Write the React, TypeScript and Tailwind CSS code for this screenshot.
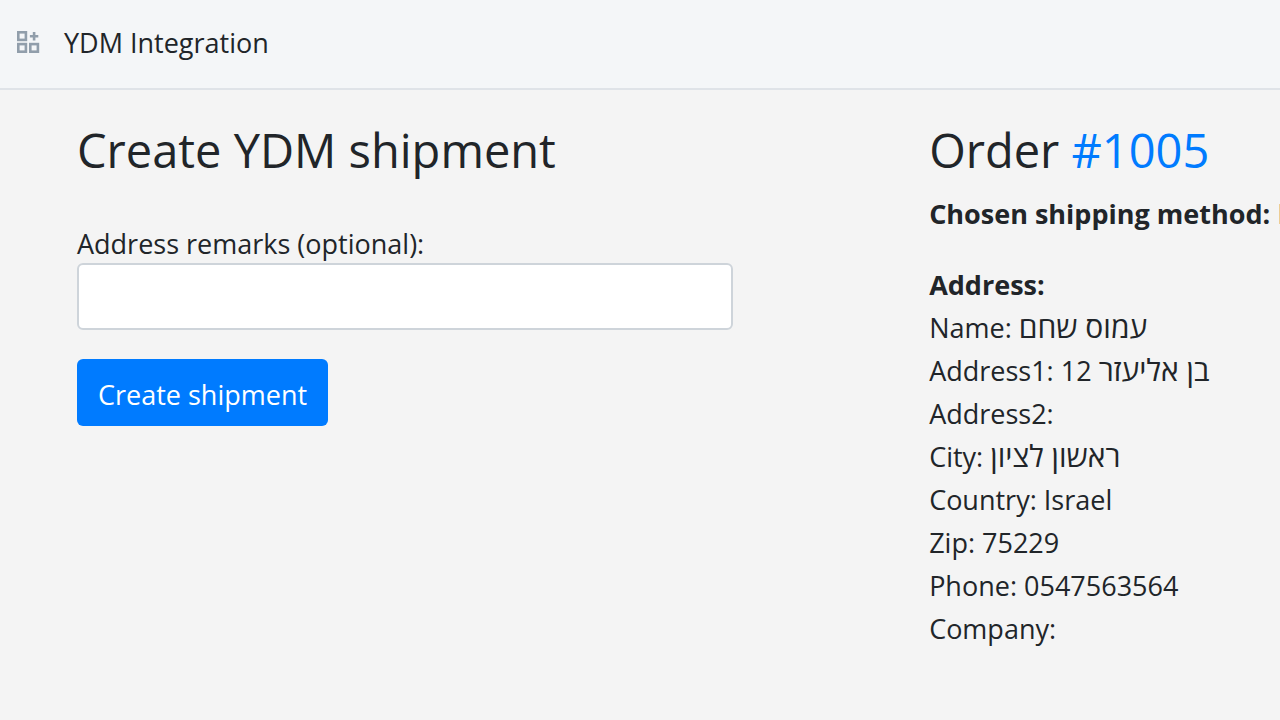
import React, { useState } from "react";

interface AddressLine {
  label: string;
  hebrew?: string;
  value?: string;
}

const addressLines: AddressLine[] = [
  { label: "Name", hebrew: "עמוס שחם" },
  { label: "Address1", hebrew: "בן אליעזר", value: "12" },
  { label: "Address2" },
  { label: "City", hebrew: "ראשון לציון" },
  { label: "Country", value: "Israel" },
  { label: "Zip", value: "75229" },
  { label: "Phone", value: "0547563564" },
  { label: "Company" },
];

const AppsIcon: React.FC = () => (
  <svg viewBox="0 0 24 24" className="h-6 w-6 text-[#919eab]" fill="none" stroke="currentColor" strokeWidth="2.6" aria-hidden="true">
    <rect x="2.3" y="2.3" width="7.6" height="7.6" />
    <rect x="2.3" y="14.1" width="7.6" height="7.6" />
    <rect x="14.3" y="14.1" width="7.6" height="7.6" />
    <path d="M18.1 2v8.4M13.9 6.2h8.4" />
  </svg>
);

const App: React.FC = () => {
  const [remarks, setRemarks] = useState<string>("");

  return (
    <div className="min-h-screen overflow-x-hidden bg-[#f4f4f4] font-['Open_Sans','Noto_Sans',sans-serif] text-[27px] leading-[43px] text-[#212529]">
      <header className="flex h-[90px] items-center gap-6 border-b-2 border-[#dfe3e8] bg-[#f4f6f8] px-4 pb-1">
        <AppsIcon />
        <span>YDM Integration</span>
      </header>
      <main className="grid grid-cols-[minmax(0,17fr)_minmax(0,7fr)] pt-8 pl-[77px]">
        <section>
          <h1 className="text-[47px] leading-[56px]">Create YDM shipment</h1>
          <form className="mt-[46px] flex w-[77%] flex-col items-start" onSubmit={e => e.preventDefault()}>
            <label htmlFor="remarks" className="leading-[39px]">
              Address remarks (optional):
            </label>
            <input
              id="remarks"
              type="text"
              value={remarks}
              onChange={e => setRemarks(e.target.value)}
              className="h-[67px] w-full rounded-md border-2 border-[#ced4da] bg-white px-5"
            />
            <button type="submit" className="mt-[29px] h-[67px] rounded-md bg-[#007bff] px-[21px] pt-1 text-white">
              Create shipment
            </button>
          </form>
        </section>
        <section className="whitespace-nowrap">
          <h2 className="text-[47px] leading-[56px]">
            Order{" "}
            <a href="#1005" className="text-[#007bff]">
              #1005
            </a>
          </h2>
          <p className="mt-[14px]">
            <strong>Chosen shipping method:</strong> Delivery
          </p>
          <address className="mt-7 not-italic">
            <strong className="block">Address:</strong>
            {addressLines.map(({ label, hebrew, value }) => (
              <div key={label}>
                {label}: {hebrew && <span className="text-[30px] leading-none">{hebrew}</span>}
                {hebrew && value ? ` ${value}` : value}
              </div>
            ))}
          </address>
        </section>
      </main>
    </div>
  );
};

export default App;
